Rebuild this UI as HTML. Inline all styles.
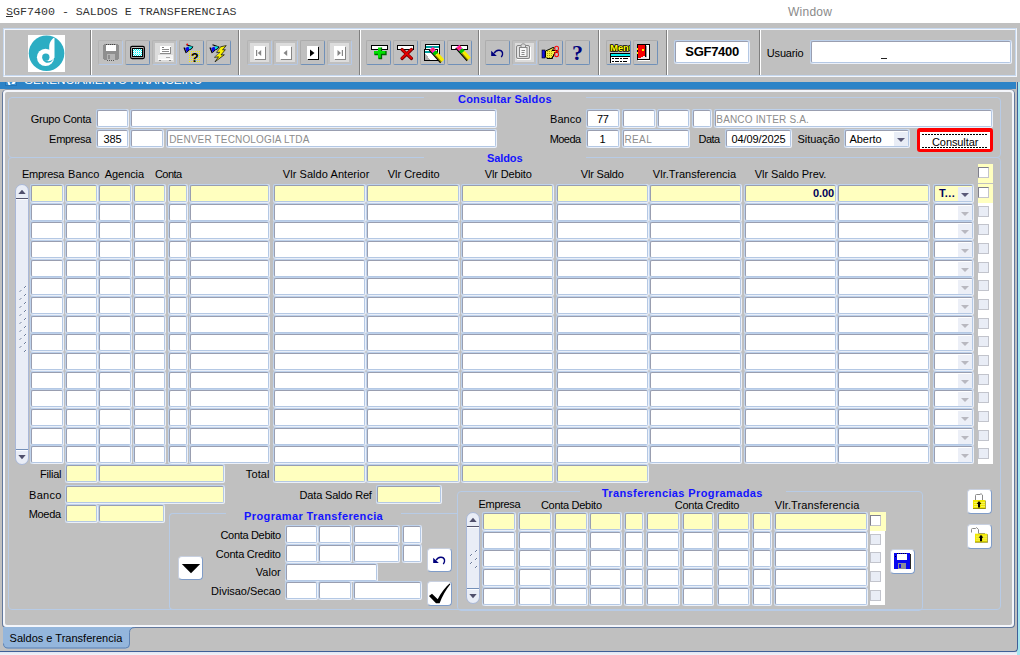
<!DOCTYPE html><html><head><meta charset="utf-8"><title>SGF7400 - SALDOS E TRANSFERENCIAS</title><style>
*{box-sizing:border-box;margin:0;padding:0}
html,body{width:1020px;height:655px;overflow:hidden;background:#fff}
body{position:relative;font-family:"Liberation Sans",sans-serif;font-size:11px;color:#000}
.a{position:absolute}
.g{background:#c0c0c0}
.l{position:absolute;white-space:nowrap;font-size:11px;line-height:13px;height:13px}
.r{text-align:right}
.i{position:absolute;background:#fff;border:1px solid;border-color:#999eb0 #b4c8e4 #b4c8e4 #999eb0;border-radius:2px;box-shadow:-1px -1px 0 #bed2ec,1px 1px 0 #ebf0f9,-1px 1px 0 #d2dff2,1px -1px 0 #d2dff2;font-size:11px;line-height:15px;white-space:nowrap;overflow:hidden}
.y{background:#ffffbf}
.dis{color:#8a8a8a;padding-left:2px}
.c{text-align:center}
.tt{font-weight:bold;color:#1414ff}
.dz{color:#8c8c8c;font-size:10px}
.nb{font-weight:bold;color:#00005c}
.sg{font-weight:bold;font-size:13px;line-height:15px;height:15px}
.t{position:absolute;white-space:nowrap;font-weight:bold;color:#1414ff;font-size:11px;line-height:13px;background:#c0c0c0;text-align:center}
.fr{position:absolute;border:1px solid #b7cbe6;border-radius:4px}
.b{position:absolute;border:1px solid;border-color:#d6e2f4 #8fa6cc #8fa6cc #d6e2f4;border-radius:2px;background:#c0c0c0}
.wb{position:absolute;background:#fff;border:1px solid #9fb2d6;border-radius:3px;box-shadow:0 0 0 1px rgba(222,230,244,.75)}
.wb2{position:absolute;background:#fff;border:1px solid;border-color:#c8d0e0 #7f9cc8 #7f9cc8 #c8d0e0;border-radius:4px}
.sep{position:absolute;width:2px;border-left:1px solid #808080;border-right:1px solid #fff}
.cb{position:absolute;width:11px;height:11px;background:#fff;border:1px solid;border-color:#80808c #c4c4cc #c4c4cc #80808c}
.cbd{position:absolute;width:11px;height:11px;background:#e9edf6;border:1px solid #c2c4cc}
.sb{position:absolute;background:#e9edf6;border:1px solid #a9b8d8;border-radius:7px}
svg{position:absolute;overflow:visible}
</style></head><body>
<div class="a" style="left:6px;top:5px;font-family:'Liberation Mono',monospace;font-size:11.65px;line-height:14px;color:#333;white-space:nowrap"><u>S</u>GF7400 - SALDOS E TRANSFERENCIAS</div>
<div class="a" style="left:788px;top:5px;font-size:12px;line-height:14px;color:#8a8a8a;letter-spacing:.25px">Window</div>
<div class="a g" style="left:0;top:23px;width:1017px;height:629px"></div>
<div class="a g" style="left:1017px;top:23px;width:3px;height:59px"></div>
<div class="a" style="left:1017px;top:82px;width:3px;height:573px;background:#a4e6f0"></div>
<div class="a" style="left:0;top:652px;width:1017px;height:3px;background:linear-gradient(#dfe4f1,#f2f4fa)"></div>
<div class="a g" style="left:0;top:82px;width:1018px;height:570px;border-right:1px solid #3f5f97;border-bottom:1px solid #3f5f97;border-bottom-right-radius:4px"></div>
<div class="a" style="left:3px;top:28px;width:1014px;height:49px;border:1px solid;border-color:#c6d8ef #f2f5fb #f2f5fb #c6d8ef"></div>
<div class="a" style="left:4px;top:29px;width:1012px;height:47px;border:1px solid;border-color:#f2f5fb #c6d8ef #c6d8ef #f2f5fb"></div>
<div class="sep" style="left:90px;top:30px;height:45px"></div>
<div class="sep" style="left:238px;top:30px;height:45px"></div>
<div class="sep" style="left:359px;top:30px;height:45px"></div>
<div class="sep" style="left:478px;top:30px;height:45px"></div>
<div class="sep" style="left:598px;top:30px;height:45px"></div>
<div class="sep" style="left:666px;top:30px;height:45px"></div>
<div class="sep" style="left:759px;top:30px;height:45px"></div>
<div class="a" style="left:28px;top:35px;width:37px;height:37px;background:#fff"></div>
<svg style="left:28px;top:35px" width="37" height="37" viewBox="0 0 37 37"><circle cx="18.550" cy="18.250" r="17.800" fill="#2cadc3"/><circle cx="17.500" cy="22.300" r="8.600" fill="#fff"/><path d="M25.900 2.700 C24 4 21.200 7 21.200 11.500 L21.200 17 L26.500 23 L26.500 3.200 Z" fill="#fff"/><circle cx="17.800" cy="22.200" r="3.650" fill="#2cadc3"/><path d="M14.800 24.400 C17 29.200 23 28.600 25.200 24.200 C22.500 26.600 18.800 26.700 16.900 25 Z" fill="#2cadc3"/></svg>
<div class="b" style="left:98px;top:40px;width:25px;height:25px;border-color:#b4b4b4 #b6c9e6 #b6c9e6 #b4b4b4"></div>
<svg style="left:99px;top:40px" width="24" height="25" viewBox="0 0 24 25"><g shape-rendering="crispEdges"><path d="M5 4H19V20H5Z" fill="#8e8e8e"/><rect x="4" y="5" width="1" height="14" fill="#8e8e8e"/><rect x="19" y="5" width="1" height="14" fill="#8e8e8e"/><rect x="7" y="5" width="10" height="6" fill="#fff"/><path d="M7 4.5H17" stroke="#444" stroke-dasharray="1 1"/><rect x="8" y="14" width="8" height="6" fill="#b4b4b4"/><rect x="9" y="15" width="2" height="4" fill="#8e8e8e"/><path d="M8 20.5H16" stroke="#555" stroke-dasharray="1 1"/></g></svg>
<div class="b" style="left:125px;top:40px;width:25px;height:25px;border-color:#adadad #7090b8 #7090b8 #adadad"></div>
<svg style="left:126px;top:40px" width="24" height="25" viewBox="0 0 24 25"><defs><pattern id="ck" width="2" height="2" patternUnits="userSpaceOnUse"><rect width="2" height="2" fill="#00f4f4"/><rect x="0" y="0" width="1" height="1" fill="#fff"/><rect x="1" y="1" width="1" height="1" fill="#fff"/></pattern></defs><rect x="4.600" y="6.400" width="13.800" height="12.200" rx="1.500" fill="#c0c0c0" stroke="#000" stroke-width="1.200"/><rect x="6" y="8" width="11.200" height="9.200" fill="#000"/><rect x="7" y="9" width="9.200" height="7.200" fill="url(#ck)" shape-rendering="crispEdges"/><rect x="8" y="11" width="7" height="1" fill="#dff" opacity=".8"/><rect x="8" y="13" width="7" height="1" fill="#dff" opacity=".8"/></svg>
<div class="b" style="left:152px;top:40px;width:25px;height:25px;border-color:#b4b4b4 #b6c9e6 #b6c9e6 #b4b4b4"></div>
<svg style="left:153px;top:40px" width="24" height="25" viewBox="0 0 24 25"><g shape-rendering="crispEdges"><rect x="2" y="3" width="19" height="19" fill="#dcdcdc"/><rect x="7" y="6" width="11" height="8" fill="#fff"/><rect x="17" y="7" width="1" height="7" fill="#8a8a8a"/><rect x="7" y="13" width="11" height="1" fill="#8a8a8a"/><rect x="9" y="7" width="2" height="1" fill="#7a7a7a"/><rect x="9" y="9" width="7" height="1" fill="#8a8a8a"/><rect x="9" y="11" width="7" height="1" fill="#8a8a8a"/><rect x="5" y="15" width="15" height="4" fill="#f4f4f4"/><rect x="5" y="19" width="15" height="1" fill="#fff"/><rect x="13" y="17" width="4" height="1" fill="#a8a8a8"/><rect x="6" y="20" width="2" height="1" fill="#8a8a8a"/><rect x="16" y="20" width="2" height="1" fill="#8a8a8a"/></g></svg>
<div class="b" style="left:179px;top:40px;width:25px;height:25px;border-color:#adadad #7090b8 #7090b8 #adadad"></div>
<svg style="left:180px;top:40px" width="24" height="25" viewBox="0 0 24 25"><g transform="translate(3 4)"><path d="M1 3.5 L3.2 9 M3.5 0.8 L10 3" stroke="#000" stroke-width="1.2" fill="none"/><path d="M2.2 4 L5.5 2.6 L6.6 5.6 L3.6 8.6 Z" fill="#0a0ae6"/><path d="M5.5 2.6 L9.6 2.6 L8.4 5 L6.6 5.6 Z" fill="#00e6e6"/><path d="M3.6 8.6 L6.6 5.6 L8.4 5 L9.8 2.8" stroke="#000" stroke-width="1" fill="none"/></g><circle cx="7.300" cy="4.300" r="0.900" fill="#f00"/><g fill="#f4f000" shape-rendering="crispEdges"><rect x="9" y="11" width="1" height="1"/><rect x="9" y="13" width="1" height="1"/><rect x="9" y="15" width="1" height="1"/><rect x="9" y="17" width="1" height="1"/><rect x="9" y="19" width="1" height="1"/><rect x="9" y="21" width="1" height="1"/><rect x="11" y="11" width="1" height="1"/><rect x="11" y="13" width="1" height="1"/><rect x="11" y="15" width="1" height="1"/><rect x="11" y="17" width="1" height="1"/><rect x="11" y="19" width="1" height="1"/><rect x="11" y="21" width="1" height="1"/><rect x="13" y="11" width="1" height="1"/><rect x="13" y="13" width="1" height="1"/><rect x="13" y="15" width="1" height="1"/><rect x="13" y="17" width="1" height="1"/><rect x="13" y="19" width="1" height="1"/><rect x="13" y="21" width="1" height="1"/><rect x="15" y="11" width="1" height="1"/><rect x="15" y="13" width="1" height="1"/><rect x="15" y="15" width="1" height="1"/><rect x="15" y="17" width="1" height="1"/><rect x="15" y="19" width="1" height="1"/><rect x="15" y="21" width="1" height="1"/><rect x="17" y="11" width="1" height="1"/><rect x="17" y="13" width="1" height="1"/><rect x="17" y="15" width="1" height="1"/><rect x="17" y="17" width="1" height="1"/><rect x="17" y="19" width="1" height="1"/><rect x="17" y="21" width="1" height="1"/><rect x="19" y="11" width="1" height="1"/><rect x="19" y="13" width="1" height="1"/><rect x="19" y="15" width="1" height="1"/><rect x="19" y="17" width="1" height="1"/><rect x="19" y="19" width="1" height="1"/><rect x="19" y="21" width="1" height="1"/></g><text x="14.800" y="21.500" font-family="Liberation Sans,sans-serif" font-weight="bold" font-size="13" text-anchor="middle" fill="#000">?</text></svg>
<div class="b" style="left:206px;top:40px;width:25px;height:25px;border-color:#adadad #7090b8 #7090b8 #adadad"></div>
<svg style="left:206px;top:40px" width="24" height="25" viewBox="0 0 24 25"><g transform="translate(3 4)"><path d="M1 3.5 L3.2 9 M3.5 0.8 L10 3" stroke="#000" stroke-width="1.2" fill="none"/><path d="M2.2 4 L5.5 2.6 L6.6 5.6 L3.6 8.6 Z" fill="#0a0ae6"/><path d="M5.5 2.6 L9.6 2.6 L8.4 5 L6.6 5.6 Z" fill="#00e6e6"/><path d="M3.6 8.6 L6.6 5.6 L8.4 5 L9.8 2.8" stroke="#000" stroke-width="1" fill="none"/></g><path d="M20.200 5.600 L14.500 6.800 L10.400 12.700 L14 12.200 L8.400 17.400 L12.500 16.800 L9 21.800 L18.300 14.800 L15 14.900 L19.400 9.700 L16.600 9.900 Z" fill="#fbf200" stroke="#000" stroke-width=".7" stroke-linejoin="miter"/><path d="M14.200 7 L10.200 12.800 M13.500 12.500 L8.200 17.500" stroke="#8a8a8a" stroke-width=".8" fill="none"/></svg>
<div class="b" style="left:247px;top:40px;width:25px;height:25px;border-color:#b4b4b4 #b6c9e6 #b6c9e6 #b4b4b4"></div>
<svg style="left:247px;top:40px" width="24" height="25" viewBox="0 0 24 25"><g shape-rendering="crispEdges"><rect x="3" y="3" width="19" height="19" fill="#dcdcdc"/><rect x="8" y="7" width="11" height="13" fill="#868686"/><rect x="7" y="6" width="11" height="13" fill="#fff"/></g><rect x="9" y="10" width="1.200" height="6" fill="#868686"/><path d="M14.200 10 V16 L10.800 13 Z" fill="#868686"/></svg>
<div class="b" style="left:273px;top:40px;width:25px;height:25px;border-color:#b4b4b4 #b6c9e6 #b6c9e6 #b4b4b4"></div>
<svg style="left:273px;top:40px" width="24" height="25" viewBox="0 0 24 25"><g shape-rendering="crispEdges"><rect x="3" y="3" width="19" height="19" fill="#dcdcdc"/><rect x="8" y="7" width="11" height="13" fill="#868686"/><rect x="7" y="6" width="11" height="13" fill="#fff"/></g><path d="M14.200 10 V16 L10.500 13 Z" fill="#868686"/></svg>
<div class="b" style="left:300px;top:40px;width:25px;height:25px;border-color:#adadad #7090b8 #7090b8 #adadad"></div>
<svg style="left:300px;top:40px" width="24" height="25" viewBox="0 0 24 25"><g shape-rendering="crispEdges"><rect x="8" y="7" width="11" height="13" fill="#000"/><rect x="7" y="6" width="11" height="13" fill="#fff"/></g><path d="M10 9.500 V16.500 L14.500 13 Z" fill="#000"/></svg>
<div class="b" style="left:327px;top:40px;width:25px;height:25px;border-color:#b4b4b4 #b6c9e6 #b6c9e6 #b4b4b4"></div>
<svg style="left:327px;top:40px" width="24" height="25" viewBox="0 0 24 25"><g shape-rendering="crispEdges"><rect x="3" y="3" width="19" height="19" fill="#dcdcdc"/><rect x="8" y="7" width="11" height="13" fill="#868686"/><rect x="7" y="6" width="11" height="13" fill="#fff"/></g><rect x="14.800" y="10" width="1.200" height="6" fill="#868686"/><path d="M10.500 10 V16 L14 13 Z" fill="#868686"/></svg>
<div class="b" style="left:366px;top:40px;width:25px;height:25px;border-color:#adadad #7090b8 #7090b8 #adadad"></div>
<svg style="left:368px;top:40px" width="24" height="25" viewBox="0 0 24 25"><rect x="3.500" y="5.500" width="16" height="4" fill="#fff" stroke="#000"/><path d="M10 7.500 H13.500 V11 H18 V14.500 H13.500 V18.500 H10 V14.500 H6 V11 H10 Z" fill="#00e000"/><path d="M13.500 7.500 V11 M18 11 V14.500 H13.500 V18.500 H10.500 M10 14.500 H6.500" stroke="#006400" stroke-width="1.300" fill="none"/></svg>
<div class="b" style="left:393px;top:40px;width:25px;height:25px;border-color:#adadad #7090b8 #7090b8 #adadad"></div>
<svg style="left:394px;top:40px" width="24" height="25" viewBox="0 0 24 25"><rect x="3.500" y="5.500" width="16" height="4" fill="#fff" stroke="#000"/><path d="M8 9.500 L17.500 18.500 M17.500 9.500 L8 18.500" stroke="#7c0000" stroke-width="3.200" stroke-linecap="round"/><path d="M8 9.300 L17.300 18.200 M17.300 9.300 L8 18.200" stroke="#e80000" stroke-width="1.700" stroke-linecap="round"/></svg>
<div class="b" style="left:420px;top:40px;width:25px;height:25px;border-color:#adadad #7090b8 #7090b8 #adadad"></div>
<svg style="left:421px;top:40px" width="24" height="25" viewBox="0 0 24 25"><g shape-rendering="crispEdges"><rect x="4.500" y="4.500" width="14" height="13" fill="#fff" stroke="#000"/><rect x="5" y="6" width="13" height="2" fill="#00a0a0"/><rect x="3.500" y="9.500" width="13" height="11" fill="#fff" stroke="#000"/><rect x="4" y="11" width="12" height="1.500" fill="#00a0a0"/><path d="M5 14 L9 20 H4 V14Z" fill="#b0b0b0"/></g><g transform="translate(10 8.5) rotate(48)"><rect x="0" y="-2.500" width="4.500" height="5" fill="#ff20c0"/><rect x="1.300" y="-2.500" width="1.300" height="5" fill="#ff3838"/><rect x="4.500" y="-2.500" width="3.500" height="5" fill="#00c800"/><rect x="8" y="-2.500" width="9" height="5" fill="#f8ec00"/><rect x="8" y="0.800" width="9" height="1.700" fill="#8c8400"/><path d="M0 2.500 H17" stroke="#000" stroke-width="1"/></g></svg>
<div class="b" style="left:447px;top:40px;width:25px;height:25px;border-color:#adadad #7090b8 #7090b8 #adadad"></div>
<svg style="left:448px;top:40px" width="24" height="25" viewBox="0 0 24 25"><rect x="3.500" y="5.500" width="16" height="4" fill="#fff" stroke="#000"/><g transform="translate(9.5 6.5) rotate(48)"><rect x="0" y="-2.500" width="4.500" height="5" fill="#ff20c0"/><rect x="1.300" y="-2.500" width="1.300" height="5" fill="#ff3838"/><rect x="4.500" y="-2.500" width="3.500" height="5" fill="#00c800"/><rect x="8" y="-2.500" width="9" height="5" fill="#f8ec00"/><rect x="8" y="0.800" width="9" height="1.700" fill="#8c8400"/><path d="M0 2.500 H17" stroke="#000" stroke-width="1"/></g></svg>
<div class="b" style="left:485px;top:40px;width:25px;height:25px;border-color:#adadad #7090b8 #7090b8 #adadad"></div>
<svg style="left:486px;top:40px" width="24" height="25" viewBox="0 0 24 25"><path d="M5.200 10.800 V16 H10.800 Z" fill="#00007c"/><path d="M8.200 13.300 C10 9.500 15.500 9 16.500 12.800 C16.900 14.500 16.200 16 15.300 17.200" fill="none" stroke="#00007c" stroke-width="1.400"/></svg>
<div class="b" style="left:512px;top:40px;width:25px;height:25px;border-color:#b4b4b4 #b6c9e6 #b6c9e6 #b4b4b4"></div>
<svg style="left:513px;top:40px" width="24" height="25" viewBox="0 0 24 25"><g shape-rendering="crispEdges"><rect x="2" y="3" width="19" height="19" fill="#dcdcdc"/></g><rect x="3.500" y="5.500" width="13" height="13" rx="1.500" fill="#e2e2e2" stroke="#858585"/><path d="M4 19.500 H17.500 V7" stroke="#fff" fill="none"/><rect x="6.500" y="7.500" width="7.500" height="9" fill="#f8f8f8" stroke="#858585"/><path d="M8 5.500 C8 3.300 12.500 3.300 12.500 5.500 V7.500 H8Z" fill="#dcdcdc" stroke="#858585"/><path d="M8.500 10.500H12M8.500 12.500H11.500M8.500 14.500H11.500" stroke="#8a8a8a"/></svg>
<div class="b" style="left:538px;top:40px;width:25px;height:25px;border-color:#adadad #7090b8 #7090b8 #adadad"></div>
<svg style="left:540px;top:40px" width="24" height="25" viewBox="0 0 24 25"><rect x="2" y="10" width="3" height="8" fill="#1414e6" stroke="#000" stroke-width=".6"/><path d="M5.500 11 L9 9.500 L13 7.500 L14.500 8 L12 10.500 L18 10.500 L18 12.500 L14.500 12.500 L14.500 14.500 L13.500 14.500 L13.500 16.500 L12.500 16.500 L12.500 18.500 L7 18.500 L5.500 17 Z" fill="#f4ec40" stroke="#000" stroke-width="1"/><g fill="#a89c00" shape-rendering="crispEdges"><rect x="7" y="11" width="1" height="1"/><rect x="7" y="13" width="1" height="1"/><rect x="7" y="15" width="1" height="1"/><rect x="7" y="17" width="1" height="1"/><rect x="9" y="11" width="1" height="1"/><rect x="9" y="13" width="1" height="1"/><rect x="9" y="15" width="1" height="1"/><rect x="9" y="17" width="1" height="1"/><rect x="11" y="11" width="1" height="1"/><rect x="11" y="13" width="1" height="1"/><rect x="11" y="15" width="1" height="1"/><rect x="11" y="17" width="1" height="1"/></g><path d="M16.600 11.500 C13.500 9.500 14.500 6.200 16.600 6.200 C18.700 6.200 19.700 9.500 16.600 11.500 C13.500 13.500 14.500 16.800 16.600 16.800 C18.700 16.800 19.700 13.500 16.600 11.500" fill="none" stroke="#f00" stroke-width="1.100"/></svg>
<div class="b" style="left:565px;top:40px;width:25px;height:25px;border-color:#adadad #7090b8 #7090b8 #adadad"></div>
<svg style="left:566px;top:40px" width="24" height="25" viewBox="0 0 24 25"><text x="11.500" y="20" font-family="Liberation Serif,serif" font-weight="bold" font-size="22" text-anchor="middle" fill="#00007c">?</text></svg>
<div class="b" style="left:606px;top:40px;width:25px;height:25px;border-color:#adadad #7090b8 #7090b8 #adadad"></div>
<svg style="left:608px;top:40px" width="24" height="25" viewBox="0 0 24 25"><g shape-rendering="crispEdges"><rect x="2" y="13" width="20" height="1" fill="#000"/><rect x="2" y="13" width="1" height="10" fill="#000"/><rect x="3" y="14" width="19" height="2" fill="#00f0f0"/><rect x="3" y="16" width="19" height="1" fill="#000"/><rect x="3" y="17" width="19" height="6" fill="#fff"/><path d="M4 18.700H6M7 18.700H11M12 18.700H14M15 18.700H20M4 21.700H6M7 21.700H10.500M12 21.700H14M15 21.700H19" stroke="#000" stroke-width="1.300"/><rect x="6" y="18" width="1" height="1.400" fill="#fff"/></g><svg x="0" y="0" width="22" height="25" viewBox="0 0 22 25" style="overflow:hidden"><text x="2.300" y="11" font-family="Liberation Sans,sans-serif" font-weight="bold" font-size="9.500" fill="#ffff00" stroke="#000" stroke-width="1.700" paint-order="stroke" textLength="24" lengthAdjust="spacingAndGlyphs">Menu</text></svg></svg>
<div class="b" style="left:633px;top:40px;width:25px;height:25px;border-color:#adadad #7090b8 #7090b8 #adadad"></div>
<svg style="left:634px;top:40px" width="24" height="25" viewBox="0 0 24 25"><g shape-rendering="crispEdges"><rect x="3.500" y="4.500" width="12" height="14.500" fill="#e8e8e8" stroke="#000"/><rect x="12" y="6" width="1" height="11" fill="#9a9a9a"/><rect x="13" y="5" width="2" height="13" fill="#fff"/><path d="M4 5 H11 V16 H9 V17 H7 V18 H4 Z" fill="#f80000"/><rect x="10.500" y="5" width="1" height="11.500" fill="#000"/><rect x="2.500" y="8" width="1.500" height="1.500" fill="#f8f000"/><rect x="2.500" y="12" width="1.500" height="1.500" fill="#f8f000"/><rect x="8" y="9" width="1.500" height="1.500" fill="#f8f000"/><rect x="4" y="19.500" width="11.500" height="1" fill="#fff"/></g></svg>
<div class="i" style="left:675px;top:41px;width:74px;height:22px"></div>
<div id="L0" class="l sg" style="left:685.33px;top:44px;letter-spacing:-0.302px;">SGF7400</div>
<div id="L1" class="l" style="left:766.85px;top:47px;letter-spacing:-0.189px;">Usuario</div>
<div class="i" style="left:811px;top:41px;width:200px;height:22px"></div>
<div class="a" style="left:881px;top:58px;width:6px;height:1px;background:#222"></div>
<div class="a" style="left:0;top:82px;width:1016px;height:7px;background:#2c83c7;overflow:hidden"><div class="a" style="left:24px;top:-9px;color:#fff;font-size:11.7px;line-height:13px;white-space:nowrap">GERENCIAMENTO FINANCEIRO</div><div class="a" style="left:5px;top:-7px;width:12px;height:11px;border:1px solid #2874b4;background:#3a92d6"></div><div class="a" style="left:8px;top:0;width:2px;height:3px;background:#fff;transform:skewX(20deg)"></div><div class="a" style="left:12px;top:0;width:3px;height:2px;background:#fff;transform:skewX(-30deg)"></div></div>
<div class="a" style="left:2px;top:89px;width:1013px;height:539px;border-radius:5px 5px 4px 4px;border:1px solid #62789c;border-top-color:#8c98ac"></div>
<div class="a" style="left:3px;top:90px;width:1011px;height:537px;border-radius:4px;border:2px solid #f4f6fb"></div>
<div class="fr" style="left:8px;top:97px;width:993px;height:61px"></div>
<div class="fr" style="left:8px;top:157px;width:993px;height:453px"></div>
<div class="a g" style="left:424px;top:96px;width:162px;height:3px"></div>
<div id="L2" class="l tt" style="left:457.99px;top:93px;letter-spacing:0.204px;">Consultar Saldos</div>
<div class="a g" style="left:424px;top:156px;width:162px;height:3px"></div>
<div id="L3" class="l tt" style="left:486.97px;top:152px;letter-spacing:-0.102px;">Saldos</div>
<div id="L4" class="l" style="left:30.73px;top:113px;letter-spacing:-0.228px;">Grupo Conta</div>
<div class="i " style="left:97px;top:110px;width:31px;height:17px"></div>
<div class="i " style="left:131px;top:110px;width:365px;height:17px"></div>
<div id="L5" class="l" style="left:49.08px;top:133px;letter-spacing:-0.282px;">Empresa</div>
<div class="i " style="left:97px;top:130px;width:31px;height:17px"></div>
<div id="L6" class="l" style="left:103.59px;top:133px;letter-spacing:-0.163px;">385</div>
<div class="i " style="left:131px;top:130px;width:32px;height:17px"></div>
<div class="i " style="left:167px;top:130px;width:329px;height:17px"></div>
<div id="L7" class="l dz" style="left:169.21px;top:133px;letter-spacing:0.153px;">DENVER TECNOLOGIA LTDA</div>
<div id="L8" class="l" style="left:550.08px;top:113px;letter-spacing:0.010px;">Banco</div>
<div class="i " style="left:587px;top:110px;width:32px;height:17px"></div>
<div id="L9" class="l" style="left:596.88px;top:113px;letter-spacing:-0.317px;">77</div>
<div class="i " style="left:623px;top:110px;width:32px;height:17px"></div>
<div class="i " style="left:658px;top:110px;width:31px;height:17px"></div>
<div class="i " style="left:693px;top:110px;width:18px;height:17px"></div>
<div class="i " style="left:715px;top:110px;width:277px;height:17px"></div>
<div id="L10" class="l dz" style="left:716.32px;top:113px;letter-spacing:0.165px;">BANCO INTER S.A.</div>
<div id="L11" class="l" style="left:549.67px;top:133px;letter-spacing:-0.553px;">Moeda</div>
<div class="i " style="left:587px;top:130px;width:32px;height:17px"></div>
<div id="L12" class="l" style="left:599.51px;top:133px;letter-spacing:-0.250px;">1</div>
<div class="i " style="left:623px;top:130px;width:66px;height:17px"></div>
<div id="L13" class="l dz" style="left:624.41px;top:133px;letter-spacing:0.389px;">REAL</div>
<div id="L14" class="l" style="left:698.62px;top:133px;letter-spacing:-0.572px;">Data</div>
<div class="i " style="left:726px;top:130px;width:65px;height:17px"></div>
<div id="L15" class="l" style="left:731.61px;top:133px;letter-spacing:-0.119px;">04/09/2025</div>
<div id="L16" class="l" style="left:797.60px;top:133px;letter-spacing:-0.086px;">Situação</div>
<div class="i" style="left:845px;top:130px;width:64px;height:17px"><div class="a" style="right:0;top:1px;width:14px;height:14px;background:#e9edf6"></div><div class="a" style="right:3px;top:7px;border:4px solid transparent;border-top:4px solid #5a5a78;border-bottom:0"></div></div>
<div id="L17" class="l" style="left:849.50px;top:133px;letter-spacing:-0.046px;">Aberto</div>
<div class="a" style="left:917px;top:128px;width:76px;height:24px;border:solid #fe0000;border-width:4px 3px 3px 3px;border-radius:3px;background:#fff"></div>
<div class="a" style="left:922px;top:134px;width:65px;height:1px;background:repeating-linear-gradient(90deg,#000 0 2px,transparent 2px 3px)"></div>
<div class="a" style="left:922px;top:147px;width:65px;height:1px;background:repeating-linear-gradient(90deg,#000 0 2px,transparent 2px 3px)"></div>
<div id="L18" class="l" style="left:932.01px;top:136px;letter-spacing:-0.086px;">Consultar</div>
<div id="L19" class="l" style="left:22.08px;top:168px;letter-spacing:-0.298px;">Empresa</div>
<div id="L20" class="l" style="left:68.08px;top:168px;letter-spacing:0.051px;">Banco</div>
<div id="L21" class="l" style="left:104.78px;top:168px;letter-spacing:-0.070px;">Agencia</div>
<div id="L22" class="l" style="left:154.92px;top:168px;letter-spacing:-0.525px;">Conta</div>
<div id="L23" class="l" style="left:282.75px;top:168px;letter-spacing:0.065px;">Vlr Saldo Anterior</div>
<div id="L24" class="l" style="left:387.78px;top:168px;letter-spacing:-0.019px;">Vlr Credito</div>
<div id="L25" class="l" style="left:484.80px;top:168px;letter-spacing:-0.135px;">Vlr Debito</div>
<div id="L26" class="l" style="left:580.78px;top:168px;letter-spacing:-0.190px;">Vlr Saldo</div>
<div id="L27" class="l" style="left:652.78px;top:168px;letter-spacing:0.045px;">Vlr.Transferencia</div>
<div id="L28" class="l" style="left:754.75px;top:168px;letter-spacing:-0.067px;">Vlr Saldo Prev.</div>
<div class="a" style="left:978px;top:164px;width:15px;height:19px;background:#ffffbf"></div><div class="a" style="left:978px;top:184px;width:15px;height:19px;background:#ffffbf"></div>
<div class="a" style="left:978px;top:203px;width:15px;height:261px;background:#fff"></div>
<div class="cb" style="left:978px;top:167px"></div>
<div class="i y" style="left:31px;top:185px;width:32px;height:17px"></div>
<div class="i y" style="left:66px;top:185px;width:31px;height:17px"></div>
<div class="i y" style="left:99px;top:185px;width:32px;height:17px"></div>
<div class="i y" style="left:134px;top:185px;width:31px;height:17px"></div>
<div class="i y" style="left:169px;top:185px;width:18px;height:17px"></div>
<div class="i y" style="left:190px;top:185px;width:79px;height:17px"></div>
<div class="i y" style="left:274px;top:185px;width:91px;height:17px"></div>
<div class="i y" style="left:367px;top:185px;width:92px;height:17px"></div>
<div class="i y" style="left:462px;top:185px;width:91px;height:17px"></div>
<div class="i y" style="left:557px;top:185px;width:91px;height:17px"></div>
<div class="i y" style="left:650px;top:185px;width:91px;height:17px"></div>
<div class="i y r" style="left:745px;top:185px;width:91px;height:17px;"></div>
<div id="L29" class="l nb" style="left:812.99px;top:187px;letter-spacing:-0.127px;">0.00</div>
<div class="i y" style="left:838px;top:185px;width:91px;height:17px"></div>
<div class="i y" style="left:934px;top:185px;width:39px;height:17px;"><div class="a" style="right:0;top:1px;width:14px;height:14px;background:#e9edf6"></div><div class="a" style="right:3px;top:7px;border:4px solid transparent;border-top:4px solid #5a5a78;border-bottom:0"></div></div>
<div class="cb" style="left:978px;top:187px"></div>
<div id="L30" class="l nb" style="left:938.92px;top:187px;letter-spacing:0.407px;">T...</div>
<div class="i " style="left:31px;top:204px;width:32px;height:17px"></div>
<div class="i " style="left:66px;top:204px;width:31px;height:17px"></div>
<div class="i " style="left:99px;top:204px;width:32px;height:17px"></div>
<div class="i " style="left:134px;top:204px;width:31px;height:17px"></div>
<div class="i " style="left:169px;top:204px;width:18px;height:17px"></div>
<div class="i " style="left:190px;top:204px;width:79px;height:17px"></div>
<div class="i " style="left:274px;top:204px;width:91px;height:17px"></div>
<div class="i " style="left:367px;top:204px;width:92px;height:17px"></div>
<div class="i " style="left:462px;top:204px;width:91px;height:17px"></div>
<div class="i " style="left:557px;top:204px;width:91px;height:17px"></div>
<div class="i " style="left:650px;top:204px;width:91px;height:17px"></div>
<div class="i " style="left:745px;top:204px;width:91px;height:17px"></div>
<div class="i " style="left:838px;top:204px;width:91px;height:17px"></div>
<div class="i" style="left:934px;top:204px;width:39px;height:17px"><div class="a" style="right:0;top:1px;width:14px;height:14px;background:#eceff7"></div><div class="a" style="right:3px;top:7px;border:4px solid transparent;border-top:4px solid #b8b8c0;border-bottom:0"></div></div>
<div class="cbd" style="left:978px;top:206px"></div>
<div class="i " style="left:31px;top:222px;width:32px;height:17px"></div>
<div class="i " style="left:66px;top:222px;width:31px;height:17px"></div>
<div class="i " style="left:99px;top:222px;width:32px;height:17px"></div>
<div class="i " style="left:134px;top:222px;width:31px;height:17px"></div>
<div class="i " style="left:169px;top:222px;width:18px;height:17px"></div>
<div class="i " style="left:190px;top:222px;width:79px;height:17px"></div>
<div class="i " style="left:274px;top:222px;width:91px;height:17px"></div>
<div class="i " style="left:367px;top:222px;width:92px;height:17px"></div>
<div class="i " style="left:462px;top:222px;width:91px;height:17px"></div>
<div class="i " style="left:557px;top:222px;width:91px;height:17px"></div>
<div class="i " style="left:650px;top:222px;width:91px;height:17px"></div>
<div class="i " style="left:745px;top:222px;width:91px;height:17px"></div>
<div class="i " style="left:838px;top:222px;width:91px;height:17px"></div>
<div class="i" style="left:934px;top:222px;width:39px;height:17px"><div class="a" style="right:0;top:1px;width:14px;height:14px;background:#eceff7"></div><div class="a" style="right:3px;top:7px;border:4px solid transparent;border-top:4px solid #b8b8c0;border-bottom:0"></div></div>
<div class="cbd" style="left:978px;top:224px"></div>
<div class="i " style="left:31px;top:241px;width:32px;height:17px"></div>
<div class="i " style="left:66px;top:241px;width:31px;height:17px"></div>
<div class="i " style="left:99px;top:241px;width:32px;height:17px"></div>
<div class="i " style="left:134px;top:241px;width:31px;height:17px"></div>
<div class="i " style="left:169px;top:241px;width:18px;height:17px"></div>
<div class="i " style="left:190px;top:241px;width:79px;height:17px"></div>
<div class="i " style="left:274px;top:241px;width:91px;height:17px"></div>
<div class="i " style="left:367px;top:241px;width:92px;height:17px"></div>
<div class="i " style="left:462px;top:241px;width:91px;height:17px"></div>
<div class="i " style="left:557px;top:241px;width:91px;height:17px"></div>
<div class="i " style="left:650px;top:241px;width:91px;height:17px"></div>
<div class="i " style="left:745px;top:241px;width:91px;height:17px"></div>
<div class="i " style="left:838px;top:241px;width:91px;height:17px"></div>
<div class="i" style="left:934px;top:241px;width:39px;height:17px"><div class="a" style="right:0;top:1px;width:14px;height:14px;background:#eceff7"></div><div class="a" style="right:3px;top:7px;border:4px solid transparent;border-top:4px solid #b8b8c0;border-bottom:0"></div></div>
<div class="cbd" style="left:978px;top:243px"></div>
<div class="i " style="left:31px;top:260px;width:32px;height:17px"></div>
<div class="i " style="left:66px;top:260px;width:31px;height:17px"></div>
<div class="i " style="left:99px;top:260px;width:32px;height:17px"></div>
<div class="i " style="left:134px;top:260px;width:31px;height:17px"></div>
<div class="i " style="left:169px;top:260px;width:18px;height:17px"></div>
<div class="i " style="left:190px;top:260px;width:79px;height:17px"></div>
<div class="i " style="left:274px;top:260px;width:91px;height:17px"></div>
<div class="i " style="left:367px;top:260px;width:92px;height:17px"></div>
<div class="i " style="left:462px;top:260px;width:91px;height:17px"></div>
<div class="i " style="left:557px;top:260px;width:91px;height:17px"></div>
<div class="i " style="left:650px;top:260px;width:91px;height:17px"></div>
<div class="i " style="left:745px;top:260px;width:91px;height:17px"></div>
<div class="i " style="left:838px;top:260px;width:91px;height:17px"></div>
<div class="i" style="left:934px;top:260px;width:39px;height:17px"><div class="a" style="right:0;top:1px;width:14px;height:14px;background:#eceff7"></div><div class="a" style="right:3px;top:7px;border:4px solid transparent;border-top:4px solid #b8b8c0;border-bottom:0"></div></div>
<div class="cbd" style="left:978px;top:262px"></div>
<div class="i " style="left:31px;top:278px;width:32px;height:17px"></div>
<div class="i " style="left:66px;top:278px;width:31px;height:17px"></div>
<div class="i " style="left:99px;top:278px;width:32px;height:17px"></div>
<div class="i " style="left:134px;top:278px;width:31px;height:17px"></div>
<div class="i " style="left:169px;top:278px;width:18px;height:17px"></div>
<div class="i " style="left:190px;top:278px;width:79px;height:17px"></div>
<div class="i " style="left:274px;top:278px;width:91px;height:17px"></div>
<div class="i " style="left:367px;top:278px;width:92px;height:17px"></div>
<div class="i " style="left:462px;top:278px;width:91px;height:17px"></div>
<div class="i " style="left:557px;top:278px;width:91px;height:17px"></div>
<div class="i " style="left:650px;top:278px;width:91px;height:17px"></div>
<div class="i " style="left:745px;top:278px;width:91px;height:17px"></div>
<div class="i " style="left:838px;top:278px;width:91px;height:17px"></div>
<div class="i" style="left:934px;top:278px;width:39px;height:17px"><div class="a" style="right:0;top:1px;width:14px;height:14px;background:#eceff7"></div><div class="a" style="right:3px;top:7px;border:4px solid transparent;border-top:4px solid #b8b8c0;border-bottom:0"></div></div>
<div class="cbd" style="left:978px;top:280px"></div>
<div class="i " style="left:31px;top:297px;width:32px;height:17px"></div>
<div class="i " style="left:66px;top:297px;width:31px;height:17px"></div>
<div class="i " style="left:99px;top:297px;width:32px;height:17px"></div>
<div class="i " style="left:134px;top:297px;width:31px;height:17px"></div>
<div class="i " style="left:169px;top:297px;width:18px;height:17px"></div>
<div class="i " style="left:190px;top:297px;width:79px;height:17px"></div>
<div class="i " style="left:274px;top:297px;width:91px;height:17px"></div>
<div class="i " style="left:367px;top:297px;width:92px;height:17px"></div>
<div class="i " style="left:462px;top:297px;width:91px;height:17px"></div>
<div class="i " style="left:557px;top:297px;width:91px;height:17px"></div>
<div class="i " style="left:650px;top:297px;width:91px;height:17px"></div>
<div class="i " style="left:745px;top:297px;width:91px;height:17px"></div>
<div class="i " style="left:838px;top:297px;width:91px;height:17px"></div>
<div class="i" style="left:934px;top:297px;width:39px;height:17px"><div class="a" style="right:0;top:1px;width:14px;height:14px;background:#eceff7"></div><div class="a" style="right:3px;top:7px;border:4px solid transparent;border-top:4px solid #b8b8c0;border-bottom:0"></div></div>
<div class="cbd" style="left:978px;top:299px"></div>
<div class="i " style="left:31px;top:316px;width:32px;height:17px"></div>
<div class="i " style="left:66px;top:316px;width:31px;height:17px"></div>
<div class="i " style="left:99px;top:316px;width:32px;height:17px"></div>
<div class="i " style="left:134px;top:316px;width:31px;height:17px"></div>
<div class="i " style="left:169px;top:316px;width:18px;height:17px"></div>
<div class="i " style="left:190px;top:316px;width:79px;height:17px"></div>
<div class="i " style="left:274px;top:316px;width:91px;height:17px"></div>
<div class="i " style="left:367px;top:316px;width:92px;height:17px"></div>
<div class="i " style="left:462px;top:316px;width:91px;height:17px"></div>
<div class="i " style="left:557px;top:316px;width:91px;height:17px"></div>
<div class="i " style="left:650px;top:316px;width:91px;height:17px"></div>
<div class="i " style="left:745px;top:316px;width:91px;height:17px"></div>
<div class="i " style="left:838px;top:316px;width:91px;height:17px"></div>
<div class="i" style="left:934px;top:316px;width:39px;height:17px"><div class="a" style="right:0;top:1px;width:14px;height:14px;background:#eceff7"></div><div class="a" style="right:3px;top:7px;border:4px solid transparent;border-top:4px solid #b8b8c0;border-bottom:0"></div></div>
<div class="cbd" style="left:978px;top:318px"></div>
<div class="i " style="left:31px;top:334px;width:32px;height:17px"></div>
<div class="i " style="left:66px;top:334px;width:31px;height:17px"></div>
<div class="i " style="left:99px;top:334px;width:32px;height:17px"></div>
<div class="i " style="left:134px;top:334px;width:31px;height:17px"></div>
<div class="i " style="left:169px;top:334px;width:18px;height:17px"></div>
<div class="i " style="left:190px;top:334px;width:79px;height:17px"></div>
<div class="i " style="left:274px;top:334px;width:91px;height:17px"></div>
<div class="i " style="left:367px;top:334px;width:92px;height:17px"></div>
<div class="i " style="left:462px;top:334px;width:91px;height:17px"></div>
<div class="i " style="left:557px;top:334px;width:91px;height:17px"></div>
<div class="i " style="left:650px;top:334px;width:91px;height:17px"></div>
<div class="i " style="left:745px;top:334px;width:91px;height:17px"></div>
<div class="i " style="left:838px;top:334px;width:91px;height:17px"></div>
<div class="i" style="left:934px;top:334px;width:39px;height:17px"><div class="a" style="right:0;top:1px;width:14px;height:14px;background:#eceff7"></div><div class="a" style="right:3px;top:7px;border:4px solid transparent;border-top:4px solid #b8b8c0;border-bottom:0"></div></div>
<div class="cbd" style="left:978px;top:336px"></div>
<div class="i " style="left:31px;top:353px;width:32px;height:17px"></div>
<div class="i " style="left:66px;top:353px;width:31px;height:17px"></div>
<div class="i " style="left:99px;top:353px;width:32px;height:17px"></div>
<div class="i " style="left:134px;top:353px;width:31px;height:17px"></div>
<div class="i " style="left:169px;top:353px;width:18px;height:17px"></div>
<div class="i " style="left:190px;top:353px;width:79px;height:17px"></div>
<div class="i " style="left:274px;top:353px;width:91px;height:17px"></div>
<div class="i " style="left:367px;top:353px;width:92px;height:17px"></div>
<div class="i " style="left:462px;top:353px;width:91px;height:17px"></div>
<div class="i " style="left:557px;top:353px;width:91px;height:17px"></div>
<div class="i " style="left:650px;top:353px;width:91px;height:17px"></div>
<div class="i " style="left:745px;top:353px;width:91px;height:17px"></div>
<div class="i " style="left:838px;top:353px;width:91px;height:17px"></div>
<div class="i" style="left:934px;top:353px;width:39px;height:17px"><div class="a" style="right:0;top:1px;width:14px;height:14px;background:#eceff7"></div><div class="a" style="right:3px;top:7px;border:4px solid transparent;border-top:4px solid #b8b8c0;border-bottom:0"></div></div>
<div class="cbd" style="left:978px;top:355px"></div>
<div class="i " style="left:31px;top:372px;width:32px;height:17px"></div>
<div class="i " style="left:66px;top:372px;width:31px;height:17px"></div>
<div class="i " style="left:99px;top:372px;width:32px;height:17px"></div>
<div class="i " style="left:134px;top:372px;width:31px;height:17px"></div>
<div class="i " style="left:169px;top:372px;width:18px;height:17px"></div>
<div class="i " style="left:190px;top:372px;width:79px;height:17px"></div>
<div class="i " style="left:274px;top:372px;width:91px;height:17px"></div>
<div class="i " style="left:367px;top:372px;width:92px;height:17px"></div>
<div class="i " style="left:462px;top:372px;width:91px;height:17px"></div>
<div class="i " style="left:557px;top:372px;width:91px;height:17px"></div>
<div class="i " style="left:650px;top:372px;width:91px;height:17px"></div>
<div class="i " style="left:745px;top:372px;width:91px;height:17px"></div>
<div class="i " style="left:838px;top:372px;width:91px;height:17px"></div>
<div class="i" style="left:934px;top:372px;width:39px;height:17px"><div class="a" style="right:0;top:1px;width:14px;height:14px;background:#eceff7"></div><div class="a" style="right:3px;top:7px;border:4px solid transparent;border-top:4px solid #b8b8c0;border-bottom:0"></div></div>
<div class="cbd" style="left:978px;top:374px"></div>
<div class="i " style="left:31px;top:390px;width:32px;height:17px"></div>
<div class="i " style="left:66px;top:390px;width:31px;height:17px"></div>
<div class="i " style="left:99px;top:390px;width:32px;height:17px"></div>
<div class="i " style="left:134px;top:390px;width:31px;height:17px"></div>
<div class="i " style="left:169px;top:390px;width:18px;height:17px"></div>
<div class="i " style="left:190px;top:390px;width:79px;height:17px"></div>
<div class="i " style="left:274px;top:390px;width:91px;height:17px"></div>
<div class="i " style="left:367px;top:390px;width:92px;height:17px"></div>
<div class="i " style="left:462px;top:390px;width:91px;height:17px"></div>
<div class="i " style="left:557px;top:390px;width:91px;height:17px"></div>
<div class="i " style="left:650px;top:390px;width:91px;height:17px"></div>
<div class="i " style="left:745px;top:390px;width:91px;height:17px"></div>
<div class="i " style="left:838px;top:390px;width:91px;height:17px"></div>
<div class="i" style="left:934px;top:390px;width:39px;height:17px"><div class="a" style="right:0;top:1px;width:14px;height:14px;background:#eceff7"></div><div class="a" style="right:3px;top:7px;border:4px solid transparent;border-top:4px solid #b8b8c0;border-bottom:0"></div></div>
<div class="cbd" style="left:978px;top:392px"></div>
<div class="i " style="left:31px;top:409px;width:32px;height:17px"></div>
<div class="i " style="left:66px;top:409px;width:31px;height:17px"></div>
<div class="i " style="left:99px;top:409px;width:32px;height:17px"></div>
<div class="i " style="left:134px;top:409px;width:31px;height:17px"></div>
<div class="i " style="left:169px;top:409px;width:18px;height:17px"></div>
<div class="i " style="left:190px;top:409px;width:79px;height:17px"></div>
<div class="i " style="left:274px;top:409px;width:91px;height:17px"></div>
<div class="i " style="left:367px;top:409px;width:92px;height:17px"></div>
<div class="i " style="left:462px;top:409px;width:91px;height:17px"></div>
<div class="i " style="left:557px;top:409px;width:91px;height:17px"></div>
<div class="i " style="left:650px;top:409px;width:91px;height:17px"></div>
<div class="i " style="left:745px;top:409px;width:91px;height:17px"></div>
<div class="i " style="left:838px;top:409px;width:91px;height:17px"></div>
<div class="i" style="left:934px;top:409px;width:39px;height:17px"><div class="a" style="right:0;top:1px;width:14px;height:14px;background:#eceff7"></div><div class="a" style="right:3px;top:7px;border:4px solid transparent;border-top:4px solid #b8b8c0;border-bottom:0"></div></div>
<div class="cbd" style="left:978px;top:411px"></div>
<div class="i " style="left:31px;top:428px;width:32px;height:17px"></div>
<div class="i " style="left:66px;top:428px;width:31px;height:17px"></div>
<div class="i " style="left:99px;top:428px;width:32px;height:17px"></div>
<div class="i " style="left:134px;top:428px;width:31px;height:17px"></div>
<div class="i " style="left:169px;top:428px;width:18px;height:17px"></div>
<div class="i " style="left:190px;top:428px;width:79px;height:17px"></div>
<div class="i " style="left:274px;top:428px;width:91px;height:17px"></div>
<div class="i " style="left:367px;top:428px;width:92px;height:17px"></div>
<div class="i " style="left:462px;top:428px;width:91px;height:17px"></div>
<div class="i " style="left:557px;top:428px;width:91px;height:17px"></div>
<div class="i " style="left:650px;top:428px;width:91px;height:17px"></div>
<div class="i " style="left:745px;top:428px;width:91px;height:17px"></div>
<div class="i " style="left:838px;top:428px;width:91px;height:17px"></div>
<div class="i" style="left:934px;top:428px;width:39px;height:17px"><div class="a" style="right:0;top:1px;width:14px;height:14px;background:#eceff7"></div><div class="a" style="right:3px;top:7px;border:4px solid transparent;border-top:4px solid #b8b8c0;border-bottom:0"></div></div>
<div class="cbd" style="left:978px;top:430px"></div>
<div class="i " style="left:31px;top:446px;width:32px;height:17px"></div>
<div class="i " style="left:66px;top:446px;width:31px;height:17px"></div>
<div class="i " style="left:99px;top:446px;width:32px;height:17px"></div>
<div class="i " style="left:134px;top:446px;width:31px;height:17px"></div>
<div class="i " style="left:169px;top:446px;width:18px;height:17px"></div>
<div class="i " style="left:190px;top:446px;width:79px;height:17px"></div>
<div class="i " style="left:274px;top:446px;width:91px;height:17px"></div>
<div class="i " style="left:367px;top:446px;width:92px;height:17px"></div>
<div class="i " style="left:462px;top:446px;width:91px;height:17px"></div>
<div class="i " style="left:557px;top:446px;width:91px;height:17px"></div>
<div class="i " style="left:650px;top:446px;width:91px;height:17px"></div>
<div class="i " style="left:745px;top:446px;width:91px;height:17px"></div>
<div class="i " style="left:838px;top:446px;width:91px;height:17px"></div>
<div class="i" style="left:934px;top:446px;width:39px;height:17px"><div class="a" style="right:0;top:1px;width:14px;height:14px;background:#eceff7"></div><div class="a" style="right:3px;top:7px;border:4px solid transparent;border-top:4px solid #b8b8c0;border-bottom:0"></div></div>
<div class="cbd" style="left:978px;top:448px"></div>
<div class="sb" style="left:15px;top:184px;width:14px;height:281px"></div>
<div class="a" style="left:16px;top:198px;width:12px;height:1px;background:#55566e"></div>
<div class="a" style="left:16px;top:199px;width:12px;height:1px;background:#fbfcff"></div>
<div class="a" style="left:16px;top:449px;width:12px;height:1px;background:#7490b8"></div>
<div class="a" style="left:16px;top:450px;width:12px;height:1px;background:#fbfcff"></div>
<svg style="left:15px;top:184px" width="14" height="281" viewBox="0 0 14 281"><path d="M3.3 10 L7.0 5.800 L10.7 10 Z M3.3 271 L7.0 275.2 L10.7 271 Z" fill="#50506c"/><path d="M9 104 l2 -2" stroke="#6c7c9c" stroke-width="1"/><path d="M10 104.2 l1.6 -1.6" stroke="#fff" stroke-width=".8"/><path d="M9 112 l2 -2" stroke="#6c7c9c" stroke-width="1"/><path d="M10 112.2 l1.6 -1.6" stroke="#fff" stroke-width=".8"/><path d="M9 120 l2 -2" stroke="#6c7c9c" stroke-width="1"/><path d="M10 120.2 l1.6 -1.6" stroke="#fff" stroke-width=".8"/><path d="M9 128 l2 -2" stroke="#6c7c9c" stroke-width="1"/><path d="M10 128.2 l1.6 -1.6" stroke="#fff" stroke-width=".8"/><path d="M9 136 l2 -2" stroke="#6c7c9c" stroke-width="1"/><path d="M10 136.2 l1.6 -1.6" stroke="#fff" stroke-width=".8"/><path d="M9 144 l2 -2" stroke="#6c7c9c" stroke-width="1"/><path d="M10 144.2 l1.6 -1.6" stroke="#fff" stroke-width=".8"/><path d="M9 152 l2 -2" stroke="#6c7c9c" stroke-width="1"/><path d="M10 152.2 l1.6 -1.6" stroke="#fff" stroke-width=".8"/><path d="M9 160 l2 -2" stroke="#6c7c9c" stroke-width="1"/><path d="M10 160.2 l1.6 -1.6" stroke="#fff" stroke-width=".8"/><path d="M9 168 l2 -2" stroke="#6c7c9c" stroke-width="1"/><path d="M10 168.2 l1.6 -1.6" stroke="#fff" stroke-width=".8"/><path d="M4.5 108 l2 -2" stroke="#6c7c9c" stroke-width="1"/><path d="M5.5 108.2 l1.6 -1.6" stroke="#fff" stroke-width=".8"/><path d="M4.5 116 l2 -2" stroke="#6c7c9c" stroke-width="1"/><path d="M5.5 116.2 l1.6 -1.6" stroke="#fff" stroke-width=".8"/><path d="M4.5 124 l2 -2" stroke="#6c7c9c" stroke-width="1"/><path d="M5.5 124.2 l1.6 -1.6" stroke="#fff" stroke-width=".8"/><path d="M4.5 132 l2 -2" stroke="#6c7c9c" stroke-width="1"/><path d="M5.5 132.2 l1.6 -1.6" stroke="#fff" stroke-width=".8"/><path d="M4.5 140 l2 -2" stroke="#6c7c9c" stroke-width="1"/><path d="M5.5 140.2 l1.6 -1.6" stroke="#fff" stroke-width=".8"/><path d="M4.5 148 l2 -2" stroke="#6c7c9c" stroke-width="1"/><path d="M5.5 148.2 l1.6 -1.6" stroke="#fff" stroke-width=".8"/><path d="M4.5 156 l2 -2" stroke="#6c7c9c" stroke-width="1"/><path d="M5.5 156.2 l1.6 -1.6" stroke="#fff" stroke-width=".8"/><path d="M4.5 164 l2 -2" stroke="#6c7c9c" stroke-width="1"/><path d="M5.5 164.2 l1.6 -1.6" stroke="#fff" stroke-width=".8"/></svg>
<div id="L31" class="l" style="left:40.08px;top:468px;letter-spacing:-0.236px;">Filial</div>
<div class="i y" style="left:66px;top:465px;width:31px;height:17px"></div>
<div class="i y" style="left:99px;top:465px;width:125px;height:17px"></div>
<div id="L32" class="l" style="left:245.87px;top:468px;letter-spacing:0.113px;">Total</div>
<div class="i y" style="left:274px;top:465px;width:91px;height:17px"></div>
<div class="i y" style="left:367px;top:465px;width:92px;height:17px"></div>
<div class="i y" style="left:462px;top:465px;width:91px;height:17px"></div>
<div class="i y" style="left:557px;top:465px;width:91px;height:17px"></div>
<div id="L33" class="l" style="left:29.08px;top:489px;letter-spacing:0.260px;">Banco</div>
<div class="i y" style="left:66px;top:486px;width:158px;height:17px"></div>
<div id="L34" class="l" style="left:299.60px;top:489px;letter-spacing:-0.175px;">Data Saldo Ref</div>
<div class="i y" style="left:377px;top:486px;width:64px;height:17px"></div>
<div id="L35" class="l" style="left:28.67px;top:508px;letter-spacing:-0.302px;">Moeda</div>
<div class="i y" style="left:66px;top:505px;width:31px;height:17px"></div>
<div class="i y" style="left:99px;top:505px;width:65px;height:17px"></div>
<div class="fr" style="left:169px;top:513px;width:288px;height:97px;border-radius:4px 0 0 4px;border-right:0"></div>
<div class="a g" style="left:226px;top:512px;width:175px;height:3px"></div>
<div id="L36" class="l tt" style="left:244.10px;top:510px;letter-spacing:0.382px;">Programar Transferencia</div>
<div id="L37" class="l" style="left:220.50px;top:529px;letter-spacing:-0.324px;">Conta Debito</div>
<div class="i " style="left:286px;top:526px;width:31px;height:17px"></div>
<div class="i " style="left:319px;top:526px;width:32px;height:17px"></div>
<div class="i " style="left:354px;top:526px;width:45px;height:17px"></div>
<div class="i " style="left:403px;top:526px;width:18px;height:17px"></div>
<div id="L38" class="l" style="left:215.86px;top:548px;letter-spacing:-0.238px;">Conta Credito</div>
<div class="i " style="left:286px;top:545px;width:31px;height:17px"></div>
<div class="i " style="left:319px;top:545px;width:32px;height:17px"></div>
<div class="i " style="left:354px;top:545px;width:45px;height:17px"></div>
<div class="i " style="left:403px;top:545px;width:18px;height:17px"></div>
<div id="L39" class="l" style="left:255.76px;top:566px;letter-spacing:0.031px;">Valor</div>
<div class="i " style="left:286px;top:564px;width:91px;height:17px"></div>
<div id="L40" class="l" style="left:211.11px;top:585px;letter-spacing:-0.037px;">Divisao/Secao</div>
<div class="i " style="left:286px;top:582px;width:31px;height:17px"></div>
<div class="i " style="left:319px;top:582px;width:32px;height:17px"></div>
<div class="i " style="left:354px;top:582px;width:67px;height:17px"></div>
<div class="wb2" style="left:178px;top:556px;width:25px;height:24px"></div>
<svg style="left:178px;top:556px" width="25" height="24" viewBox="0 0 25 24"><path d="M3.800 7.900 H22.200 L13 17.200 Z" fill="#000"/></svg>
<div class="wb2" style="left:427px;top:548px;width:25px;height:24px"></div>
<svg style="left:427.900px;top:547.300px" width="24" height="25" viewBox="0 0 24 25"><path d="M5.200 10.800 V16 H10.800 Z" fill="#00007c"/><path d="M8.200 13.300 C10 9.500 15.500 9 16.500 12.800 C16.900 14.500 16.200 16 15.300 17.200" fill="none" stroke="#00007c" stroke-width="1.400"/></svg>
<div class="wb2" style="left:427px;top:581px;width:25px;height:25px"></div>
<svg style="left:427px;top:581px" width="25" height="25" viewBox="0 0 25 25"><path d="M2 15 L5 12.800 L10.700 18.300 C14 11.500 18.500 6 22.600 2.400 L23.300 3.200 C19 8.500 15 15.500 12.600 22.200 L9 22.200 Z" fill="#000"/></svg>
<div class="fr" style="left:457px;top:491px;width:466px;height:120px"></div>
<div class="a g" style="left:580px;top:490px;width:206px;height:3px"></div>
<div id="L41" class="l tt" style="left:601.82px;top:487px;letter-spacing:0.385px;">Transferencias Programadas</div>
<div id="L42" class="l" style="left:478.61px;top:498px;letter-spacing:-0.333px;">Empresa</div>
<div id="L43" class="l" style="left:540.90px;top:499px;letter-spacing:-0.282px;">Conta Debito</div>
<div id="L44" class="l" style="left:674.77px;top:499px;letter-spacing:-0.265px;">Conta Credito</div>
<div id="L45" class="l" style="left:774.78px;top:499px;letter-spacing:0.113px;">Vlr.Transferencia</div>
<div class="a" style="left:870px;top:512px;width:16px;height:19px;background:#ffffbf"></div>
<div class="a" style="left:870px;top:531px;width:15px;height:74px;background:#fff"></div>
<div class="i y" style="left:483px;top:513px;width:32px;height:17px"></div>
<div class="i y" style="left:519px;top:513px;width:32px;height:17px"></div>
<div class="i y" style="left:555px;top:513px;width:32px;height:17px"></div>
<div class="i y" style="left:590px;top:513px;width:31px;height:17px"></div>
<div class="i y" style="left:625px;top:513px;width:18px;height:17px"></div>
<div class="i y" style="left:647px;top:513px;width:32px;height:17px"></div>
<div class="i y" style="left:683px;top:513px;width:30px;height:17px"></div>
<div class="i y" style="left:718px;top:513px;width:31px;height:17px"></div>
<div class="i y" style="left:753px;top:513px;width:18px;height:17px"></div>
<div class="i y" style="left:775px;top:513px;width:92px;height:17px"></div>
<div class="cb" style="left:870px;top:515px"></div>
<div class="i " style="left:483px;top:532px;width:32px;height:17px"></div>
<div class="i " style="left:519px;top:532px;width:32px;height:17px"></div>
<div class="i " style="left:555px;top:532px;width:32px;height:17px"></div>
<div class="i " style="left:590px;top:532px;width:31px;height:17px"></div>
<div class="i " style="left:625px;top:532px;width:18px;height:17px"></div>
<div class="i " style="left:647px;top:532px;width:32px;height:17px"></div>
<div class="i " style="left:683px;top:532px;width:30px;height:17px"></div>
<div class="i " style="left:718px;top:532px;width:31px;height:17px"></div>
<div class="i " style="left:753px;top:532px;width:18px;height:17px"></div>
<div class="i " style="left:775px;top:532px;width:92px;height:17px"></div>
<div class="cbd" style="left:870px;top:534px"></div>
<div class="i " style="left:483px;top:550px;width:32px;height:17px"></div>
<div class="i " style="left:519px;top:550px;width:32px;height:17px"></div>
<div class="i " style="left:555px;top:550px;width:32px;height:17px"></div>
<div class="i " style="left:590px;top:550px;width:31px;height:17px"></div>
<div class="i " style="left:625px;top:550px;width:18px;height:17px"></div>
<div class="i " style="left:647px;top:550px;width:32px;height:17px"></div>
<div class="i " style="left:683px;top:550px;width:30px;height:17px"></div>
<div class="i " style="left:718px;top:550px;width:31px;height:17px"></div>
<div class="i " style="left:753px;top:550px;width:18px;height:17px"></div>
<div class="i " style="left:775px;top:550px;width:92px;height:17px"></div>
<div class="cbd" style="left:870px;top:552px"></div>
<div class="i " style="left:483px;top:569px;width:32px;height:17px"></div>
<div class="i " style="left:519px;top:569px;width:32px;height:17px"></div>
<div class="i " style="left:555px;top:569px;width:32px;height:17px"></div>
<div class="i " style="left:590px;top:569px;width:31px;height:17px"></div>
<div class="i " style="left:625px;top:569px;width:18px;height:17px"></div>
<div class="i " style="left:647px;top:569px;width:32px;height:17px"></div>
<div class="i " style="left:683px;top:569px;width:30px;height:17px"></div>
<div class="i " style="left:718px;top:569px;width:31px;height:17px"></div>
<div class="i " style="left:753px;top:569px;width:18px;height:17px"></div>
<div class="i " style="left:775px;top:569px;width:92px;height:17px"></div>
<div class="cbd" style="left:870px;top:571px"></div>
<div class="i " style="left:483px;top:588px;width:32px;height:17px"></div>
<div class="i " style="left:519px;top:588px;width:32px;height:17px"></div>
<div class="i " style="left:555px;top:588px;width:32px;height:17px"></div>
<div class="i " style="left:590px;top:588px;width:31px;height:17px"></div>
<div class="i " style="left:625px;top:588px;width:18px;height:17px"></div>
<div class="i " style="left:647px;top:588px;width:32px;height:17px"></div>
<div class="i " style="left:683px;top:588px;width:30px;height:17px"></div>
<div class="i " style="left:718px;top:588px;width:31px;height:17px"></div>
<div class="i " style="left:753px;top:588px;width:18px;height:17px"></div>
<div class="i " style="left:775px;top:588px;width:92px;height:17px"></div>
<div class="cbd" style="left:870px;top:590px"></div>
<div class="sb" style="left:466px;top:512px;width:14px;height:92px"></div>
<div class="a" style="left:467px;top:526px;width:12px;height:1px;background:#55566e"></div>
<div class="a" style="left:467px;top:527px;width:12px;height:1px;background:#fbfcff"></div>
<div class="a" style="left:467px;top:588px;width:12px;height:1px;background:#7490b8"></div>
<div class="a" style="left:467px;top:589px;width:12px;height:1px;background:#fbfcff"></div>
<svg style="left:466px;top:512px" width="14" height="92" viewBox="0 0 14 92"><path d="M3.3 10 L7.0 5.800 L10.7 10 Z M3.3 82 L7.0 86.2 L10.7 82 Z" fill="#50506c"/><path d="M9 40 l2 -2" stroke="#6c7c9c" stroke-width="1"/><path d="M10 40.2 l1.6 -1.6" stroke="#fff" stroke-width=".8"/><path d="M9 48 l2 -2" stroke="#6c7c9c" stroke-width="1"/><path d="M10 48.2 l1.6 -1.6" stroke="#fff" stroke-width=".8"/><path d="M9 56 l2 -2" stroke="#6c7c9c" stroke-width="1"/><path d="M10 56.2 l1.6 -1.6" stroke="#fff" stroke-width=".8"/><path d="M4 44 l2 -2" stroke="#6c7c9c" stroke-width="1"/><path d="M5 44.2 l1.6 -1.6" stroke="#fff" stroke-width=".8"/><path d="M4 52 l2 -2" stroke="#6c7c9c" stroke-width="1"/><path d="M5 52.2 l1.6 -1.6" stroke="#fff" stroke-width=".8"/></svg>
<div class="wb2" style="left:890px;top:549px;width:25px;height:25px"></div>
<svg style="left:894px;top:553px" width="17" height="17" viewBox="0 0 17 17" shape-rendering="crispEdges"><rect x="1" y="1" width="15.500" height="15.300" fill="#000" opacity=".85"/><rect x="0" y="0" width="16" height="15.500" fill="#0808f0"/><rect x="3" y="0.500" width="10" height="6.500" fill="#fff"/><path d="M3 0.400H13" stroke="#000" stroke-width=".8" stroke-dasharray="1 1"/><rect x="1" y="3" width="1" height="1" fill="#000"/><rect x="4.200" y="10.400" width="7.600" height="5.100" fill="#8c8c98"/><rect x="5.200" y="11.400" width="1.900" height="3.200" fill="#0808f0"/></svg>
<div class="wb2" style="left:967px;top:489px;width:25px;height:25px"></div>
<div class="wb2" style="left:967px;top:524px;width:25px;height:25px"></div>
<svg style="left:967px;top:489px" width="25" height="25" viewBox="0 0 25 25"><path d="M8.500 11 V6.500 Q8.500 5.500 9.500 5.500 H13 L14 4.600 L15.500 6 V11" fill="none" stroke="#8a8a8a" stroke-width="1"/><rect x="6" y="11" width="12" height="8.500" fill="#f0e800"/><rect x="6" y="19" width="12.400" height="0.900" fill="#8c8400"/><rect x="18" y="11.5" width="0.700" height="8.400" fill="#8c8400"/><rect x="7.5" y="13" width="1" height="1" fill="#fffcb0"/><rect x="7.5" y="15" width="1" height="1" fill="#fffcb0"/><rect x="7.5" y="17" width="1" height="1" fill="#fffcb0"/><rect x="9.5" y="13" width="1" height="1" fill="#fffcb0"/><rect x="9.5" y="15" width="1" height="1" fill="#fffcb0"/><rect x="9.5" y="17" width="1" height="1" fill="#fffcb0"/><rect x="14.5" y="13" width="1" height="1" fill="#fffcb0"/><rect x="14.5" y="15" width="1" height="1" fill="#fffcb0"/><rect x="14.5" y="17" width="1" height="1" fill="#fffcb0"/><rect x="16.5" y="13" width="1" height="1" fill="#fffcb0"/><rect x="16.5" y="15" width="1" height="1" fill="#fffcb0"/><rect x="16.5" y="17" width="1" height="1" fill="#fffcb0"/><path d="M12 12 L9.7 15 H11 V18.5 H13 V15 H14.3 Z" fill="#000"/></svg>
<svg style="left:967px;top:524px" width="25" height="25" viewBox="0 0 25 25"><path d="M4.500 8.500 V5.500 Q4.500 4.500 5.500 4.500 H8.500 L9.500 3.600 L11.500 5.500 V9.500 H18" fill="none" stroke="#8a8a8a" stroke-width="1"/><rect x="8" y="9.7" width="12" height="8.500" fill="#f0e800"/><rect x="8" y="17.7" width="12.400" height="0.900" fill="#8c8400"/><rect x="20" y="10.2" width="0.700" height="8.400" fill="#8c8400"/><rect x="9.5" y="11.7" width="1" height="1" fill="#fffcb0"/><rect x="9.5" y="13.7" width="1" height="1" fill="#fffcb0"/><rect x="9.5" y="15.7" width="1" height="1" fill="#fffcb0"/><rect x="11.5" y="11.7" width="1" height="1" fill="#fffcb0"/><rect x="11.5" y="13.7" width="1" height="1" fill="#fffcb0"/><rect x="11.5" y="15.7" width="1" height="1" fill="#fffcb0"/><rect x="16.5" y="11.7" width="1" height="1" fill="#fffcb0"/><rect x="16.5" y="13.7" width="1" height="1" fill="#fffcb0"/><rect x="16.5" y="15.7" width="1" height="1" fill="#fffcb0"/><rect x="18.5" y="11.7" width="1" height="1" fill="#fffcb0"/><rect x="18.5" y="13.7" width="1" height="1" fill="#fffcb0"/><rect x="18.5" y="15.7" width="1" height="1" fill="#fffcb0"/><path d="M14 10.7 L11.7 13.7 H13 V17.2 H15 V13.7 H16.3 Z" fill="#000"/></svg>
<svg style="left:0;top:620px" width="140" height="32" viewBox="0 620 140 32"><path d="M3 627 H135 C131.500 627.300 130 629 130 632.500 V644 Q130 648.500 125.500 648.500 H8 Q3 648.500 3 643.500 Z" fill="#94b6dc"/><path d="M135 627.500 C131.500 627.600 129.500 629 129.500 632.500 V644 Q129.500 648 125.500 648 H8 Q3.500 648 3.500 643.500" fill="none" stroke="#5f82b2" stroke-width="1"/></svg>
<div id="L46" class="l" style="left:9.60px;top:632px;letter-spacing:0.009px;">Saldos e Transferencia</div>
</body></html>
